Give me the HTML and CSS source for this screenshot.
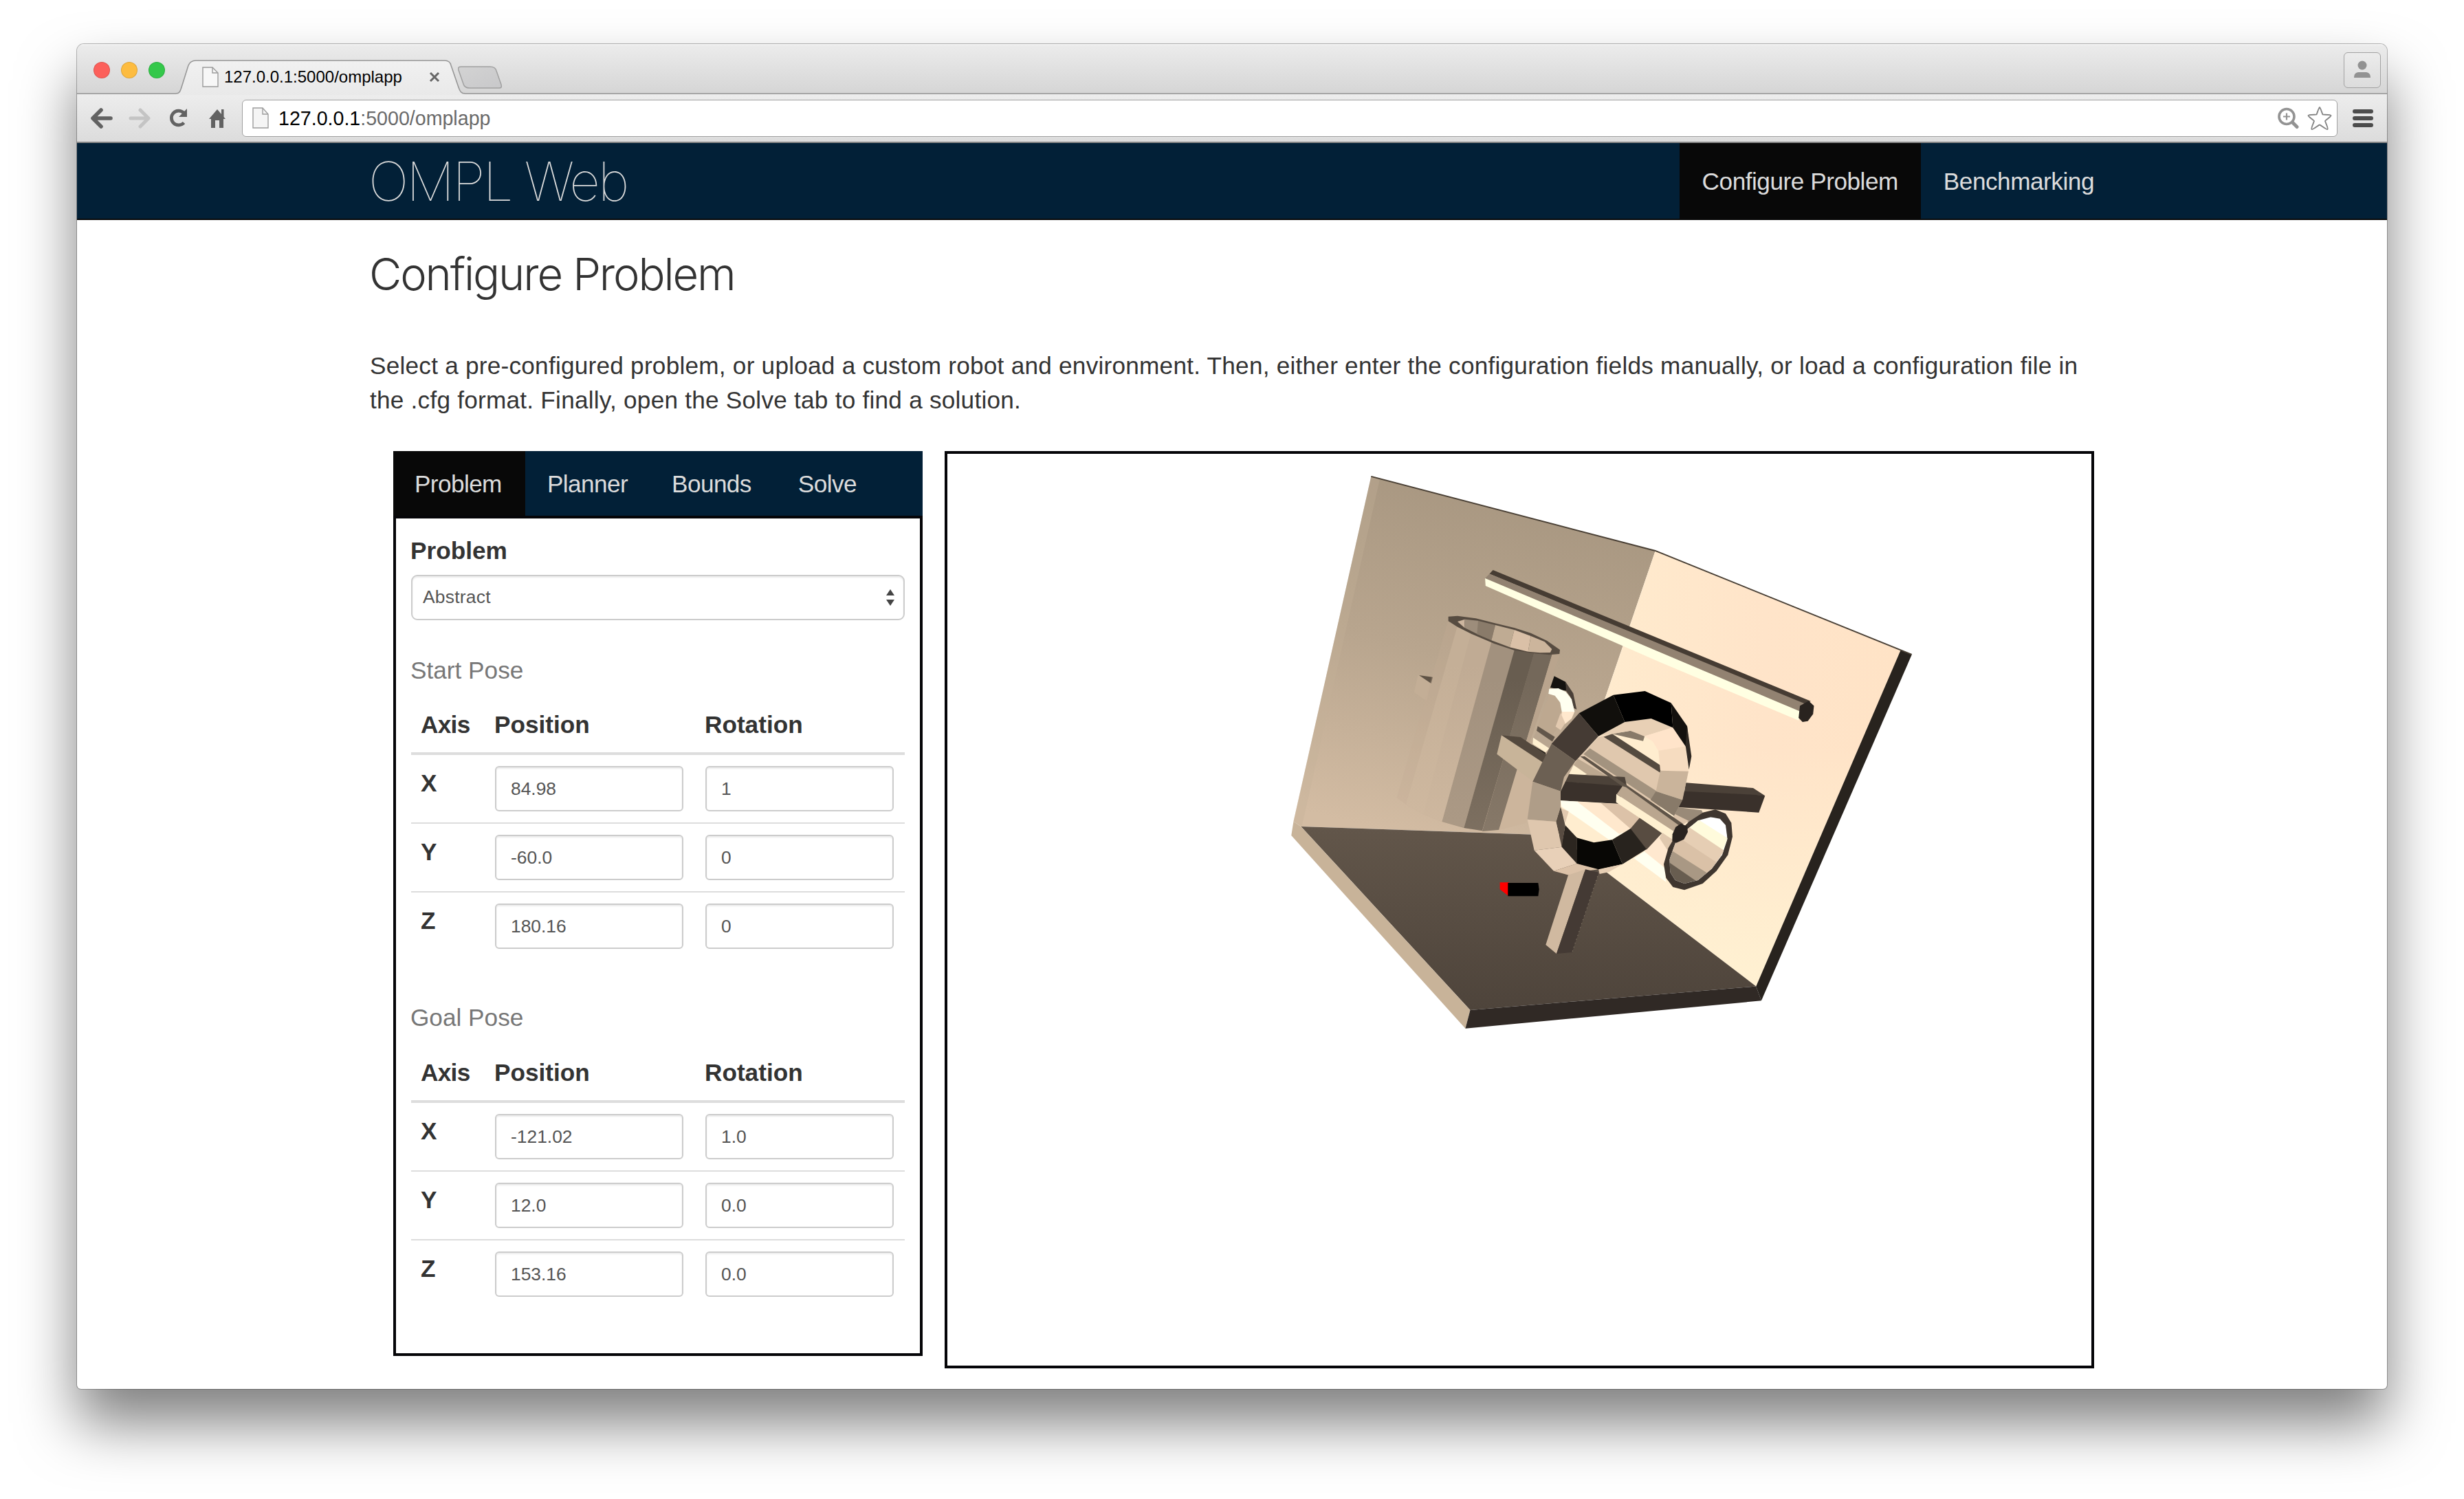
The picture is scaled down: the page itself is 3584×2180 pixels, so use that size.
FILE: index.html
```html
<!DOCTYPE html>
<html lang="en">
<head>
<meta charset="utf-8">
<title>OMPL Web</title>
<link rel="stylesheet" href="styles.css">
</head>
<body>
<div class="window">
  <div class="tabstrip">
    <div class="lights"><i class="light red"></i><i class="light amber"></i><i class="light green"></i></div>
    <div class="tab">
      <svg class="tab-shape" width="422" height="51" viewBox="0 0 422 51">
        <defs><linearGradient id="tabfill" x1="0" y1="0" x2="0" y2="1"><stop offset="0" stop-color="#f1f1f1"/><stop offset="1" stop-color="#e9e9e9"/></linearGradient></defs>
        <path d="M0 49C5 49 6 46 8 40L18 8C20 3 24 1 29 1H391C396 1 399 4 400 8L411 40C413 46 415 49 420 49V51H0Z" fill="url(#tabfill)"/>
        <path d="M0 49C5 49 6 46 8 40L18 8C20 3 24 1 29 1H391C396 1 399 4 400 8L411 40C413 46 415 49 420 49" fill="none" stroke="#979797" stroke-width="1.6"/>
      </svg>
      <svg class="page-icon" width="24" height="30" viewBox="0 0 24 30"><path d="M1 1H15L23 9V29H1Z" fill="#f7f7f7" stroke="#9a9a9a" stroke-width="1.4"/><path d="M15 1V9H23" fill="none" stroke="#9a9a9a" stroke-width="1.4"/></svg>
      <span class="tab-title">127.0.0.1:5000/omplapp</span>
      <svg class="tab-close" width="16" height="16" viewBox="0 0 16 16"><path d="M2 2L14 14M14 2L2 14" stroke="#666" stroke-width="3"/></svg>
    </div>
    <svg class="new-tab" width="66" height="36" viewBox="0 0 66 36">
      <defs><linearGradient id="newtab" x1="0" y1="0" x2="1" y2="1"><stop offset="0" stop-color="#d3d3d3"/><stop offset="1" stop-color="#c8c8ca"/></linearGradient></defs>
      <path d="M6 2H48C53 2 56 4 57 8L64 28C65 32 64 33 61 33H18C13 33 10 31 9 27L2 7C1 3 2 2 6 2Z" fill="url(#newtab)" stroke="#a0a0a0" stroke-width="1.500"/>
    </svg>
    <div class="profile">
      <svg width="26" height="28" viewBox="0 0 26 28"><ellipse cx="13" cy="7" rx="6.5" ry="6.5" fill="#929292"/><path d="M1 25C1 18 5 17 9 17H17C21 17 25 18 25 25Z" fill="#929292"/></svg>
    </div>
  </div>
  <div class="toolbar">
    <svg class="tool back" width="32" height="30" viewBox="0 0 32 30"><path d="M15 3L3 15L15 27M4 15H29" fill="none" stroke="#626262" stroke-width="5.6" stroke-linecap="round" stroke-linejoin="round"/></svg>
    <svg class="tool forward" width="32" height="30" viewBox="0 0 32 30"><path d="M17 3L29 15L17 27M28 15H3" fill="none" stroke="#c4c4c4" stroke-width="5" stroke-linecap="round" stroke-linejoin="round"/></svg>
    <svg class="tool reload" width="30" height="30" viewBox="0 0 30 30"><path d="M23 7A10.4 10.4 0 1 0 23.500 21.500" fill="none" stroke="#626262" stroke-width="4.800"/><path d="M28 1V13H16Z" fill="#626262"/></svg>
    <svg class="tool home" width="28" height="30" viewBox="0 0 28 30"><path d="M14 2L2 16H5V29H11V18H17V29H23V16H26L23.500 13V2H20V9Z" fill="#626262"/></svg>
    <div class="omnibox">
      <svg width="24" height="32" viewBox="0 0 24 32"><path d="M1 1H15L23 10V30H1Z" fill="#f5f5f5" stroke="#9c9c9c" stroke-width="1.4"/><path d="M15 1V10H23" fill="none" stroke="#9c9c9c" stroke-width="1.4"/></svg>
      <span class="url"><b>127.0.0.1</b>:5000/omplapp</span>
      <svg class="zoom" width="32" height="32" viewBox="0 0 32 32"><circle cx="13" cy="13.500" r="11" fill="none" stroke="#939393" stroke-width="3.600"/><path d="M8 13.500H18M13 8.500V18.500" stroke="#939393" stroke-width="2.200"/><path d="M21.500 22L28 28.500" stroke="#939393" stroke-width="5" stroke-linecap="round"/></svg>
      <svg class="star" width="36" height="36" viewBox="0 0 36 36"><path d="M18 2C19 2 22 12 22.500 12.500C23 13 34 12.500 34.500 14C35 15.500 26 21 26 22C26 23 31 33 29.500 34C28 35 19 27.500 18 27.500C17 27.500 8 35 6.500 34C5 33 10 23 10 22C10 21 1 15.500 1.500 14C2 12.500 13 13 13.500 12.500C14 12 17 2 18 2Z" fill="#fff" stroke="#858585" stroke-width="1.900"/></svg>
    </div>
    <svg class="menu" width="30" height="28" viewBox="0 0 30 28"><path d="M3 4H27M3 14H27M3 24H27" stroke="#4c4c4c" stroke-width="6" stroke-linecap="round"/></svg>
  </div>

  <nav class="navbar">
    <div class="brand">OMPL Web</div>
    <div class="nav-link active">Configure Problem</div>
    <div class="nav-link">Benchmarking</div>
  </nav>

  <main class="page">
    <h1>Configure Problem</h1>
    <p>Select a pre-configured problem, or upload a custom robot and environment. Then, either enter the configuration fields manually, or load a configuration file in<br>the .cfg format. Finally, open the Solve tab to find a solution.</p>
    <div class="columns">
      <section class="config">
        <div class="tabs">
          <div class="t active">Problem</div><div class="t planner">Planner</div><div class="t bounds">Bounds</div><div class="t">Solve</div>
        </div>
        <div class="config-body">
          <div class="label">Problem</div>
          <div class="select"><span>Abstract</span><svg width="12" height="24" viewBox="0 0 12 24"><path d="M6 0L12 9H0ZM6 24L0 15H12Z" fill="#444"/></svg></div>
          <div class="pose start">Start Pose</div>
          <div class="row head"><span class="axis">Axis</span><span>Position</span><span>Rotation</span></div>
          <div class="row"><span>X</span><div class="input">84.98</div><div class="input">1</div></div>
          <div class="row"><span>Y</span><div class="input">-60.0</div><div class="input">0</div></div>
          <div class="row"><span>Z</span><div class="input">180.16</div><div class="input">0</div></div>
          <div class="pose goal">Goal Pose</div>
          <div class="row head"><span class="axis">Axis</span><span>Position</span><span>Rotation</span></div>
          <div class="row"><span>X</span><div class="input">-121.02</div><div class="input">1.0</div></div>
          <div class="row"><span>Y</span><div class="input">12.0</div><div class="input">0.0</div></div>
          <div class="row"><span>Z</span><div class="input">153.16</div><div class="input">0.0</div></div>
        </div>
      </section>
      <section class="viewer">
        <svg width="1664" height="1326" viewBox="1378 660 1664 1326">
          <defs>
            <linearGradient id="wallL" x1="0.55" y1="0" x2="0.3" y2="1"><stop offset="0" stop-color="#a79680"/><stop offset=".5" stop-color="#b8a58e"/><stop offset="1" stop-color="#d3bca3"/></linearGradient>
            <linearGradient id="wallR" x1="0" y1="0" x2="1" y2="0"><stop offset="0" stop-color="#ffedcf"/><stop offset=".6" stop-color="#ffe4c9"/><stop offset="1" stop-color="#ffe3c6"/></linearGradient>
            <linearGradient id="wallRlow" x1="0" y1="0" x2="0" y2="1"><stop offset=".45" stop-color="#fff1d2" stop-opacity="0"/><stop offset="1" stop-color="#fff1d2"/></linearGradient>
            <linearGradient id="floor" x1="0" y1="0" x2="0" y2="1"><stop offset="0" stop-color="#62564a"/><stop offset="1" stop-color="#4e443b"/></linearGradient>
            <linearGradient id="fade" x1="0" y1="0" x2="0" y2="1"><stop offset=".2" stop-color="#d3bca3" stop-opacity="0"/><stop offset="1" stop-color="#d3bca3" stop-opacity=".9"/></linearGradient>
            <clipPath id="hole"><path d="M435 272L550 210L665 195L760 235L815 318L828 425L800 550L765 620L710 695L572 675L495 722L415 735L340 715L290 660L270 580L270 512L335 380Z"/></clipPath>
            <clipPath id="bell"><path d="M925 625L965 632L990 660L998 720L975 790L930 850L870 900L810 915L770 900L748 865L745 810L770 740L820 680L870 640Z"/></clipPath>
          </defs>
          <!-- room -->
          <g transform="translate(1840 660) scale(.63776 .54847)">
            <path d="M242 60L890 258L669 1012L82 988L65 975Z" fill="url(#wallL)"/>
            <path d="M242 60L262 66L84 988L65 975Z" fill="#c4b099" opacity=".32"/>
            <path d="M890 258L1450 522L1120 1412L669 1012Z" fill="url(#wallR)"/>
            <path d="M890 258L1450 522L1120 1412L669 1012Z" fill="url(#wallRlow)"/>
            <path d="M82 988L669 1012L1120 1412L468 1475Z" fill="url(#floor)"/>
            <path d="M65 975L82 988L468 1475L457 1524L60 1012Z" fill="#c8b399"/>
            <path d="M468 1475L1120 1412L1132 1450L457 1524Z" fill="#302925"/>
            <path d="M1450 520L1475 533L1132 1450L1120 1412Z" fill="#28231e"/>
            <path d="M242 60L890 257L1475 532" fill="none" stroke="#4a4035" stroke-width="3.500"/>
            <path d="M520 308L1245 656L1228 664L512 318Z" fill="#463c33"/>
            <path d="M512 318L1230 662L1220 685L502 330Z" fill="#928271"/>
            <path d="M502 330L1220 683L1217 707L900 552L503 350Z" fill="#ffffe2"/>
            <path d="M1220 668L1240 655L1252 668L1250 690L1238 709L1226 711L1217 700Z" fill="#29231f"/>
          </g>
          <!-- standing cylinder and far objects -->
          <g transform="translate(2040 880) scale(.33333)">
            <path d="M68 305L130 315L105 418L50 380Z" fill="#c3ae96"/>
            <path d="M72 306L132 314L125 342Z" fill="#5f5346"/>
            <path d="M200 65L240 95L15 870L-25 840Z" fill="#c2ad96" opacity=".3"/>
            <path d="M240 90L300 125L90 912L15 870Z" fill="#c4af97"/>
            <path d="M300 120L390 160L172 945L90 912Z" fill="#c0ab94"/>
            <path d="M390 155L490 195L268 972L172 945Z" fill="#a2917e"/>
            <path d="M490 190L575 210L348 985L268 972Z" fill="#685d50"/>
            <path d="M575 205L653 215L425 980L348 987Z" fill="#74685a"/>
            <path d="M653 215L687 213L500 760L425 980Z" fill="#b9a48d"/>
            <path d="M240 90L390 160L172 945L90 912L15 870Z" fill="url(#fade)" opacity=".8"/>
            <path d="M390 155L653 215L425 985L348 990L172 945Z" fill="url(#fade)" opacity=".22"/>
            <path d="M200 50L240 47L320 58L400 78L490 100L560 122L630 155L687 195L685 213L640 217L570 210L490 198L400 168L300 125L240 95L200 70Z" fill="#574c41"/>
            <path d="M240 72L272 62L270 98Z" fill="#cdb69f"/>
            <path d="M272 62L330 68L330 128L270 98Z" fill="#9d8d7b"/><path d="M330 68L405 87L388 154L325 127Z" fill="#8a7b6a"/>
            <path d="M405 87L488 108L468 184L388 154Z" fill="#bfab93"/><path d="M488 108L560 135L548 203L468 184Z" fill="#dac0a7"/><path d="M560 135L620 160L652 192L645 207L600 208L548 203Z" fill="#ccb59c"/>
            <path d="M642 385L690 365L735 430L700 510L650 570L585 540Z" fill="#bda890"/>
            <path d="M662 310L712 335L718 375L645 360Z" fill="#151310"/>
            <path d="M712 335L745 385L760 455L748 450L732 400L714 375Z" fill="#4a4038"/>
            <path d="M640 365L680 363L712 378L738 410L751 465L695 465L688 425L665 395L637 387Z" fill="#fffff0"/>
            <path d="M695 465L751 465L738 495L710 518L690 510Z" fill="#ffe8cd"/><path d="M690 470L668 530L690 545L710 515Z" fill="#e2c9af"/>
            <path d="M590 528L665 575L650 602L585 548Z" fill="#62564a"/>
            <path d="M585 548L655 596L635 625L570 580Z" fill="#b9a690"/>
            <path d="M570 578L640 625L625 642L568 606Z" fill="#fff0d0"/>
            <path d="M563 608L625 645L622 662L580 630Z" fill="#16130f"/>
            <path d="M505 700L605 690L570 770L540 950L420 982Z" fill="#ccb59c"/>
            <path d="M432 568L515 576L640 660L605 690Z" fill="#54493e"/>
            <path d="M432 568L610 685L567 768L412 650Z" fill="#c8b499"/>
          </g>
          <!-- horn, beam and ring -->
          <g transform="translate(2180 980) scale(.33333)">
            <path d="M715 690L775 700L745 760L722 840L680 760Z" fill="#e0c8ae"/>
            <path d="M690 700L740 775L725 845L635 772Z" fill="#ffe8cf"/>
            <path d="M635 775L723 845L730 908L590 805Z" fill="#fffff0"/>
            <path d="M760 580L885 595L890 605L830 650L765 615Z" fill="#998a78"/>
            <path d="M765 610L830 642L790 665L755 630Z" fill="#dbc3aa"/>
            <path d="M815 475L1110 498L1162 532L810 515Z" fill="#4b4138"/>
            <path d="M805 512L1125 528L1162 532L1135 605L785 582Z" fill="#3a312b"/>
            <g clip-path="url(#hole)">
              <path d="M250 180H850V760H250Z" fill="#ffedcf"/>
              <path d="M435 275L495 262L705 400L705 600L520 470L310 420L335 380Z" fill="#e0c8ae"/>
              <path d="M458 275L495 262L710 402L706 432Z" fill="#544a3f"/>
              <path d="M398 325L690 512L665 548L370 350Z" fill="#a3937f"/>
              <path d="M495 262L575 248L638 268L630 293Z" fill="#887a69"/>
              <path d="M345 370L480 450L380 440L325 400Z" fill="#bca890"/>
              <path d="M325 397L385 438L310 437Z" fill="#fff0d0"/>
              <path d="M300 437L550 450L560 495L270 470Z" fill="#4c4239"/>
              <path d="M260 468L550 490L525 567L260 552Z" fill="#3a312b"/>
              <path d="M270 553L345 557L560 705L490 730L275 580Z" fill="#fffff0"/>
              <path d="M342 557L450 564L590 670L525 698Z" fill="#ffe8cd"/>
              <path d="M445 563L525 567L640 645L580 680Z" fill="#dcc2a8"/>
              <path d="M270 585L305 600L290 650Z" fill="#e2c9af"/>
            </g>
            <!-- ring, inner faces -->
            <path d="M440 270L550 210L665 195L760 235L635 272L575 248L495 262Z" fill="#e8d0b5"/>
            <path d="M760 233L818 318L697 337L672 295L635 272Z" fill="#ffe4ca"/>
            <path d="M816 316L828 427L705 422L697 335Z" fill="#f6dcc0"/>
            <path d="M828 425L802 550L686 512L705 422Z" fill="#cab49b"/>
            <path d="M802 550L765 620L662 550L686 512Z" fill="#887a69"/>
            <path d="M615 628L712 695L645 767L573 677Z" fill="#584c41"/>
            <path d="M575 675L645 765L540 830L495 724Z" fill="#28231e"/>
            <path d="M495 724L540 830L435 854L340 828L340 715L415 736Z" fill="#080705"/>
            <path d="M341 715V828L273 755L290 660Z" fill="#2c2620"/>
            <path d="M250 645L270 580L290 660L275 755Z" fill="#584c41"/>
            <!-- ring, outer faces -->
            <path d="M350 172L500 92L550 210L435 272Z" fill="#110f0c"/>
            <path d="M500 92L638 75L752 127L760 235L665 195L550 210Z" fill="#000"/>
            <path d="M752 127L822 228L832 330L815 316L760 235Z" fill="#14110e"/>
            <path d="M822 228L841 360L830 418L815 312Z" fill="#302923"/>
            <path d="M350 172L435 272L335 380L230 305Z" fill="#453b34"/>
            <path d="M230 305L335 380L285 450L270 512L148 470Z" fill="#6c6053"/>
            <path d="M148 470L270 512L270 580L250 645L125 635Z" fill="#af9d88"/>
            <path d="M125 635L250 645L275 755L155 770Z" fill="#dfc7ae"/>
            <path d="M155 770L275 755L341 828L240 860Z" fill="#e8d0b8"/>
            <path d="M240 860L341 828L435 853L380 860L305 878Z" fill="#dcc2a8"/>
            <path d="M435 853L540 830L480 865L440 873Z" fill="#e6ceb4"/>
            <!-- rod through the ring -->
            <path d="M355 360L375 360L805 655L785 690L545 495Z" fill="#5f5448"/>
            <path d="M540 490L555 494L785 660L762 690L515 525Z" fill="#baa68f"/>
            <path d="M513 524L765 688L758 722L640 645L512 560Z" fill="#fff0d0"/>
            <!-- horn mouth -->
            <path d="M945 592L990 610L1015 650L1020 710L1000 790L950 860L890 915L810 943L760 930L730 890L720 830L740 760L775 700L830 645L890 605Z" fill="#3f362f"/>
            <g clip-path="url(#bell)">
              <path d="M740 600H1010V930H740Z" fill="#fff"/>
              <path d="M870 635L1000 718L975 775L820 670Z" fill="#fffbdc"/>
              <path d="M825 665L985 772L945 830L780 715Z" fill="#e6ceb4"/>
              <path d="M785 713L950 822L910 880L750 775Z" fill="#dac1a7"/>
              <path d="M740 762L915 872L865 910L740 822Z" fill="#a99884"/>
              <path d="M740 820L865 906L810 930L730 890Z" fill="#685d50"/>
            </g>
            <path d="M795 653L822 665L825 690L808 722L775 737L757 728L758 700L772 668Z" fill="#29231f"/>
            <!-- foot of the ring, robot -->
            <path d="M303 878L378 853L252 1221L205 1182Z" fill="#d0b9a0"/>
            <path d="M378 853L437 866L320 1215L252 1221Z" fill="#443a34"/>
            <path d="M437 866L320 1215" stroke="#a79885" stroke-width="2" stroke-dasharray="4 14" fill="none"/>
            <path d="M5 910H45V971L5 940Z" fill="#f00"/>
            <path d="M40 912H172L176 940L172 970H40Z" fill="#000"/>
          </g>
        </svg>
      </section>
    </div>
  </main>
</div>
</body>
</html>
```
FILE: styles.css
```css
* { box-sizing: border-box; }
body {
  margin: 0;
  padding: 64px 112px 160px;
  background: #fff;
  color: #333;
  font-family: "Liberation Sans", Arial, sans-serif;
  font-size: 35.2px;
}
svg { display: block; flex: none; }

.window {
  height: 1956px;
  overflow: hidden;
  background: #fff;
  border-radius: 10px 10px 6px 6px;
  box-shadow: 0 0 0 1px rgba(0, 0, 0, .28), 0 50px 84px rgba(0, 0, 0, .5);
}

/* browser chrome */
.tabstrip {
  display: flex;
  height: 73px;
  padding: 0 9px 0 24px;
  background: linear-gradient(#f4f4f4 0, #ebebeb 3px, #d5d5d5 100%);
  box-shadow: inset 0 -1.5px #979797;
}
.lights { display: flex; gap: 16px; padding-top: 26px; }
.light { width: 24px; height: 24px; border-radius: 50%; border: 1px solid rgba(0, 0, 0, .12); }
.red { background: #fc605b; }
.amber { background: #fdbc40; }
.green { background: #34c84a; }
.tab {
  position: relative;
  display: flex;
  width: 404px;
  margin-left: 16px;
}
.tab-shape { position: absolute; left: 0; top: 23px; }
.page-icon { position: relative; margin: 33px 0 0 38px; }
.tab-title {
  position: relative;
  margin: 35px 0 0 8px;
  width: 298px;
  color: #000;
  font-size: 24px;
  line-height: 26px;
}
.tab-close { position: relative; margin-top: 40px; }
.new-tab { margin: 31px 0 0 5px; }
.profile {
  display: flex;
  align-items: center;
  justify-content: center;
  width: 54px;
  height: 52px;
  margin: 12px 0 0 auto;
  border: 1.5px solid #a2a2a2;
  border-radius: 6px;
  background: linear-gradient(#ececec, #dcdcdc);
}
.toolbar {
  display: flex;
  align-items: center;
  height: 71px;
  padding: 0 20px 0 20px;
  background: linear-gradient(#ededed, #dcdcdc);
  border-bottom: 2px solid #8a8a8a;
}
.forward { margin-left: 23px; }
.reload { margin-left: 25px; }
.home { margin-left: 28px; }
.omnibox {
  display: flex;
  flex: none;
  align-items: center;
  width: 3048px;
  height: 54px;
  margin-left: 22px;
  padding: 0 7px 0 14px;
  background: #fff;
  border: 1.6px solid #a0a0a0;
  border-radius: 6px;
}
.url { margin-left: 14px; color: #6a6a6a; font-size: 28.6px; line-height: 40px; }
.url b { color: #000; font-weight: 400; }
.zoom { margin-left: auto; }
.star { margin-left: 11px; }
.menu { margin-left: 22px; }

/* site header */
.navbar {
  display: flex;
  height: 112px;
  padding: 0 393px 0 424px;
  background: #022037;
  border-bottom: 2px solid #080808;
  color: #dcdcdc;
}
.brand {
  margin-right: auto;
  font: 140 78px/112px Inter, sans-serif;
  letter-spacing: -2.9px;
}
.nav-link { padding: 0 33px; line-height: 111px; letter-spacing: -.48px; white-space: nowrap; }
.nav-link.active { background: #080808; }

.page { padding: 43px 426px 0; }
h1 {
  margin: 0 0 72px -1px;
  font: 300 65px/72px Inter, sans-serif;
  letter-spacing: -2.12px;
}
p { margin: 0 0 48px; line-height: 50.3px; letter-spacing: .23px; white-space: nowrap; }

.columns { display: flex; gap: 32px; padding-left: 34px; }
.config { width: 770px; }
.tabs { display: flex; height: 94px; background: #022037; color: #dcdcdc; line-height: 95px; letter-spacing: -.6px; }
.t { padding: 0 34px; }
.t.active { width: 192px; padding: 0 0 0 31px; background: #080808; }
.t.planner { padding: 0 32px 0 32px; }
.t.bounds { padding: 0 34px 0 32px; }
.config-body { height: 1222px; padding: 22px 22px 0; border: 4px solid #050508; }
.label { margin-bottom: 10px; font-weight: 700; line-height: 50px; text-indent: -1px; }
.select {
  display: flex;
  align-items: center;
  justify-content: space-between;
  height: 66px;
  padding: 0 13px 0 15px;
  border: 2px solid #ccc;
  border-radius: 9px;
  box-shadow: inset 0 2px 2px rgba(0, 0, 0, .075);
  color: #555;
  font-size: 26.4px;
  letter-spacing: .25px;
}
.pose { color: #777; line-height: 50px; text-indent: -1px; }
.start { margin: 48px 0 14px; }
.goal { margin: 59px 0 15px; }
.row {
  display: grid;
  grid-template-columns: 107px 274px 274px;
  padding: 16px 0 16px 15px;
  border-top: 2px solid #ddd;
  font-weight: 700;
  line-height: 50px;
}
.row > :nth-child(3) { margin-left: 32px; margin-right: -32px; }
.row > span { text-indent: -1px; }
.row.head { padding: 15px 0 15px 15px; border-top: 0; border-bottom: 4px solid #ddd; }
.row .axis { letter-spacing: -.7px; }
.row.head + .row { border-top: 0; }
.input {
  height: 66px;
  padding-left: 21px;
  border: 2px solid #ccc;
  border-radius: 6px;
  box-shadow: inset 0 2px 2px rgba(0, 0, 0, .075);
  color: #555;
  font-size: 26.4px;
  font-weight: 400;
  line-height: 62px;
}
.viewer { width: 1672px; height: 1334px; border: 4px solid #050508; }
```
